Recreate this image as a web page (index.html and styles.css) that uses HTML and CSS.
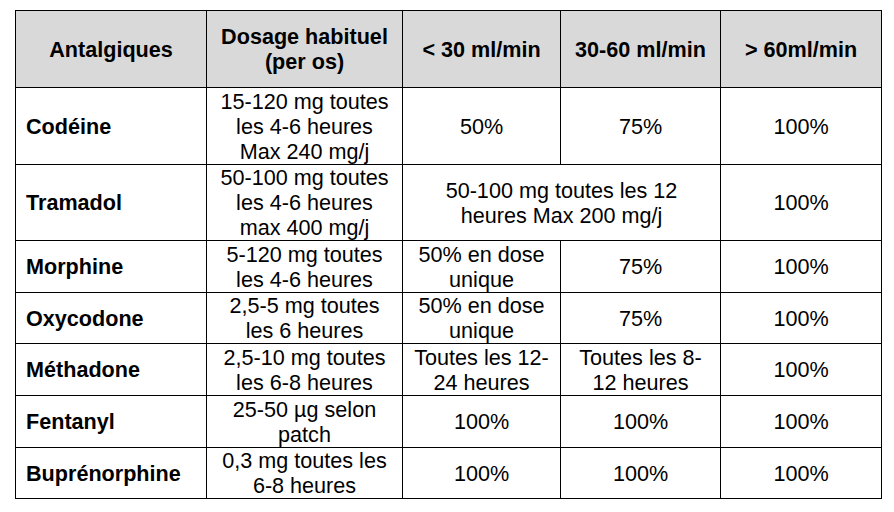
FILE: index.html
```html
<!DOCTYPE html>
<html lang="fr">
<head>
<meta charset="utf-8">
<link rel="stylesheet" href="styles.css">
</head>
<body>
<table class="dose-table">
  <colgroup>
    <col class="c1"><col class="c2"><col class="c3"><col class="c4"><col class="c5">
  </colgroup>
  <thead>
    <tr class="head">
      <th>Antalgiques</th>
      <th>Dosage habituel<br>(per os)</th>
      <th>&lt; 30 ml/min</th>
      <th>30-60 ml/min</th>
      <th>&gt; 60ml/min</th>
    </tr>
  </thead>
  <tbody>
    <tr class="r3">
      <td class="name">Codéine</td>
      <td>15-120 mg toutes<br>les 4-6 heures<br>Max 240 mg/j</td>
      <td>50%</td>
      <td>75%</td>
      <td>100%</td>
    </tr>
    <tr class="r3b">
      <td class="name">Tramadol</td>
      <td>50-100 mg toutes<br>les 4-6 heures<br>max 400 mg/j</td>
      <td colspan="2">50-100 mg toutes les 12<br>heures Max 200 mg/j</td>
      <td>100%</td>
    </tr>
    <tr class="r2">
      <td class="name">Morphine</td>
      <td>5-120 mg toutes<br>les 4-6 heures</td>
      <td>50% en dose<br>unique</td>
      <td>75%</td>
      <td>100%</td>
    </tr>
    <tr class="r2b">
      <td class="name">Oxycodone</td>
      <td>2,5-5 mg toutes<br>les 6 heures</td>
      <td>50% en dose<br>unique</td>
      <td>75%</td>
      <td>100%</td>
    </tr>
    <tr class="r2">
      <td class="name">Méthadone</td>
      <td>2,5-10 mg toutes<br>les 6-8 heures</td>
      <td>Toutes les 12-<br>24 heures</td>
      <td>Toutes les 8-<br>12 heures</td>
      <td>100%</td>
    </tr>
    <tr class="r2">
      <td class="name">Fentanyl</td>
      <td>25-50 µg selon<br>patch</td>
      <td>100%</td>
      <td>100%</td>
      <td>100%</td>
    </tr>
    <tr class="r2b">
      <td class="name">Buprénorphine</td>
      <td>0,3 mg toutes les<br>6-8 heures</td>
      <td>100%</td>
      <td>100%</td>
      <td>100%</td>
    </tr>
  </tbody>
</table>
</body>
</html>
```
FILE: styles.css
```css
html, body {
  margin: 0;
  padding: 0;
  background: #ffffff;
}

body {
  padding: 10px 0 0 15px;
  font-family: "Liberation Sans", Arial, sans-serif;
  color: #000000;
}

.dose-table {
  border-collapse: collapse;
  table-layout: fixed;
  width: 866px;
  font-size: 21.6px;
  line-height: 25px;
}

.c1 { width: 191px; }
.c2 { width: 196px; }
.c3 { width: 158px; }
.c4 { width: 160px; }
.c5 { width: 161px; }

.dose-table th,
.dose-table td {
  border: 1px solid #000000;
  padding: 0;
  text-align: center;
  vertical-align: middle;
  white-space: nowrap;
}

.dose-table th {
  background: #d9d9d9;
  font-weight: bold;
}

.head th { height: 76px; }
.r3 td { height: 76px; }
.r3b td { height: 75px; }
.r2 td { height: 51px; }
.r2b td { height: 50px; }

.dose-table td.name {
  text-align: left;
  padding-left: 10px;
  font-weight: bold;
}
```
